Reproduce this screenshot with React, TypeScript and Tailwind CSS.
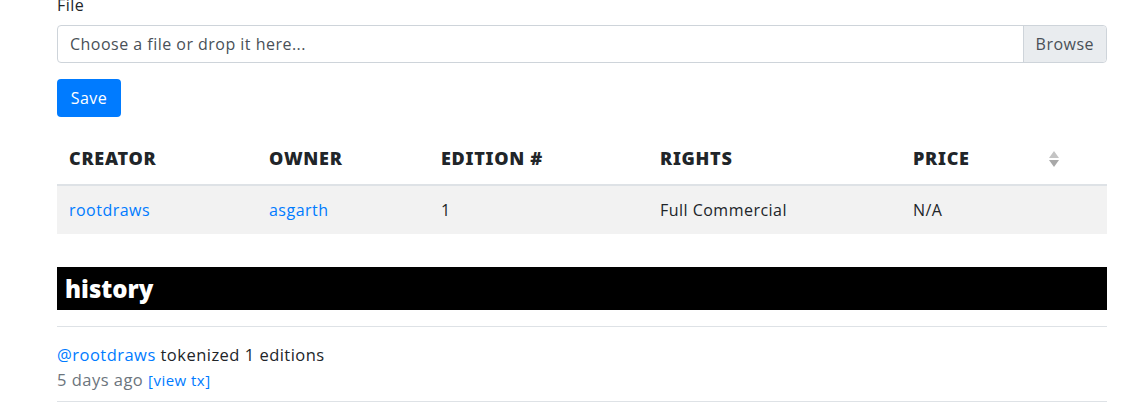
import React from 'react';

const headers = ['CREATOR', 'OWNER', 'EDITION #', 'RIGHTS', 'PRICE'];

function SortIcon() {
    return (
        <svg width="12" height="18" viewBox="0 0 12 18" className="ml-auto mr-[35px]">
            <path d="M6 1 L11 8 L1 8 Z" fill="#c4c4c4" />
            <path d="M6 17 L11 10 L1 10 Z" fill="#a8a8a8" />
        </svg>
    );
}

export default function App() {
    return (
        <div className="bg-white min-h-screen font-['Open_Sans',sans-serif] text-[#212529] text-base tracking-[0.03em]">
            <div className="ml-[57px] w-[1050px] -mt-[7px]">
                {/* upload form */}
                <label className="block leading-6 mb-2">File</label>
                <div className="flex h-[38px] border border-[#ced4da] rounded">
                    <div className="flex-1 flex items-center px-3 text-[#495057]">Choose a file or drop it here...</div>
                    <div className="flex items-center px-3 bg-[#e9ecef] border-l border-[#ced4da] text-[#495057] rounded-r">Browse</div>
                </div>
                <button className="mt-4 h-[38px] w-[64px] bg-[#007bff] text-white rounded">Save</button>

                {/* editions table */}
                <div className="mt-4">
                    <div className="grid grid-cols-[200px_172px_219px_253px_206px] h-[53px] border-b-2 border-[#dee2e6] items-center">
                        {headers.map((h, i) => (
                            <div key={h} className="flex items-center px-3 font-['Noto_Sans',sans-serif] font-black text-[18px] tracking-[0.04em]">
                                {h}
                                {i === headers.length - 1 && <SortIcon />}
                            </div>
                        ))}
                    </div>
                    <div className="grid grid-cols-[200px_172px_219px_253px_206px] h-[48px] bg-[#f2f2f2] items-center">
                        <div className="px-3 text-[#007bff]">rootdraws</div>
                        <div className="px-3 text-[#007bff]">asgarth</div>
                        <div className="px-3">1</div>
                        <div className="px-3">Full Commercial</div>
                        <div className="px-3">N/A</div>
                    </div>
                </div>

                {/* history */}
                <div className="mt-[33px] h-[43px] bg-black flex items-center px-2">
                    <h2 className="text-white font-['Noto_Sans',sans-serif] font-black text-[24px] leading-none tracking-normal">history</h2>
                </div>
                <div className="mt-4 border-t border-[#dee2e6] pt-[15px] pb-[8px] border-b text-[16.5px]">
                    <div className="leading-[25px]">
                        <span className="text-[#007bff]">@rootdraws</span> tokenized 1 editions
                    </div>
                    <div className="leading-[25px] text-[#6c757d]">
                        5 days ago <span className="text-[15px] text-[#007bff]">[view tx]</span>
                    </div>
                </div>
            </div>
        </div>
    );
}
